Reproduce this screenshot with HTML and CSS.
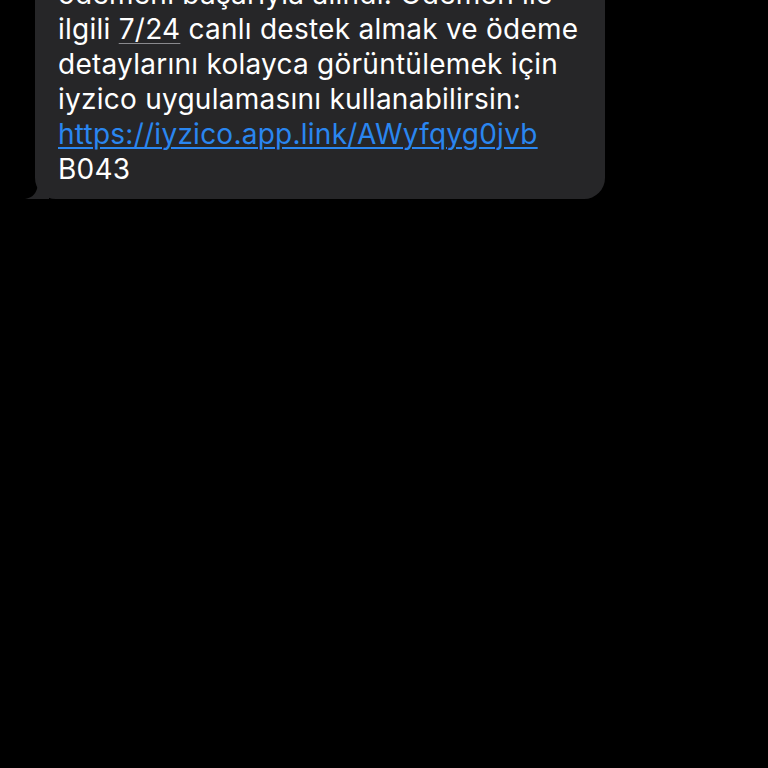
FILE: index.html
```html
<!DOCTYPE html>
<html lang="tr">
<head>
  <meta charset="UTF-8">
  <title>Mesaj</title>
  <link rel="stylesheet" href="styles.css">
</head>
<body>
  <div class="thread">
    <div class="bubble incoming">
      <p class="text">
        ödemeni başarıyla alındı. Ödemen ile<br>
        ilgili <span class="detect">7/24</span> canlı destek almak ve ödeme<br>
        detaylarını kolayca görüntülemek için<br>
        iyzico uygulamasını kullanabilirsin:<br>
        <a class="link" href="#">https://iyzico.app.link/AWyfqyg0jvb</a><br>
        B043
      </p>
      <svg class="tail" width="24" height="20" viewBox="0 0 24 20">
        <path d="M24 0 L24 20 L0 20 C6 19 10 16 12 10 C13 6 13 3 13 0 Z" fill="#262628"/>
      </svg>
    </div>
  </div>
</body>
</html>
```

FILE: styles.css
```css
html, body {
  margin: 0;
  background: #000;
}

body {
  width: 768px;
  height: 768px;
  overflow: hidden;
  font-family: Inter, "Noto Sans", sans-serif;
}

.thread {
  display: flex;
  flex-direction: column;
  padding-left: 35px;
  margin-top: -35px;
}

.bubble {
  position: relative;
  width: 570px;
  box-sizing: border-box;
  padding: 12px 10px 12px 23px;
  background: #262628;
  border-radius: 21px;
}

.text {
  margin: 0;
  font-size: 28px;
  line-height: 35px;
  letter-spacing: 0.25px;
  color: #fff;
  white-space: nowrap;
}

.detect {
  text-decoration: underline;
  text-decoration-color: #8a8a8e;
  text-decoration-thickness: 1px;
  text-underline-offset: 4px;
}

.link {
  color: #2a86f0;
  text-decoration: underline;
  text-decoration-thickness: 2px;
  text-underline-offset: 3px;
}

.tail {
  position: absolute;
  left: -10px;
  bottom: 0;
}
```
